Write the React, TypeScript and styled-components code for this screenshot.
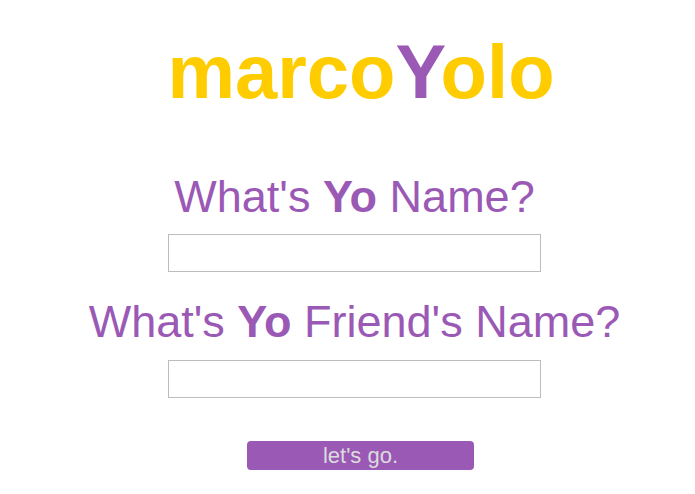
import React from "react";
import styled, { createGlobalStyle } from "styled-components";

const Global = createGlobalStyle`
  html, body { margin: 0; padding: 0; background: #ffffff; }
  body { font-family: "Liberation Sans", Arial, sans-serif; }
`;

const Page = styled.main`
  width: 695px;
  box-sizing: border-box;
  padding: 34px 0 0 14px;
  display: flex;
  flex-direction: column;
  align-items: center;
`;

const Logo = styled.h1`
  margin: 0;
  padding-left: 13px;
  font-size: 76px;
  line-height: 1;
  font-weight: 700;
  color: #ffcc00;
  white-space: nowrap;
`;

const Accent = styled.span`
  color: #9b59b6;
`;

const Question = styled.h2<{ $top: number }>`
  margin: ${(p) => p.$top}px 0 0;
  font-size: 45px;
  line-height: 1;
  font-weight: 400;
  color: #9b59b6;
  white-space: nowrap;
`;

const NameInput = styled.input<{ $top: number }>`
  margin: ${(p) => p.$top}px 0 0;
  width: 373px;
  height: 38px;
  box-sizing: border-box;
  border: 1px solid #bcbcbc;
  padding: 0 8px;
  font-family: "Liberation Sans", Arial, sans-serif;
  font-size: 18px;
  outline: none;
  background: #fff;
`;

const GoButton = styled.button`
  margin: 43px 0 0 12px;
  width: 227px;
  height: 29px;
  box-sizing: border-box;
  border: none;
  border-radius: 4px;
  background: #9b59b6;
  color: #dcdcdc;
  font-family: "Liberation Sans", Arial, sans-serif;
  font-size: 22px;
  line-height: 29px;
  padding: 0;
  cursor: pointer;
`;

export default function App() {
  return (
    <>
      <Global />
      <Page>
        <Logo>
          marco<Accent>Y</Accent>olo
        </Logo>
        <Question $top={64}>
          What's <b>Yo</b> Name?
        </Question>
        <NameInput $top={15} type="text" />
        <Question $top={27}>
          What's <b>Yo</b> Friend's Name?
        </Question>
        <NameInput $top={16} type="text" />
        <GoButton type="button">let's go.</GoButton>
      </Page>
    </>
  );
}
